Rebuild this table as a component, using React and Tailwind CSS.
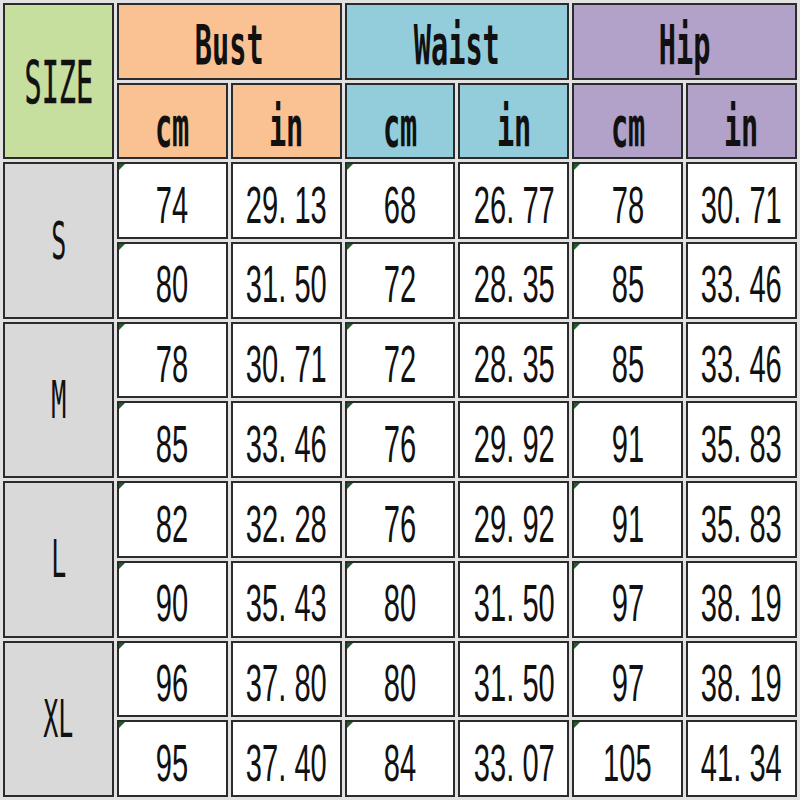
const rows = [
  {
    size: 'S',
    lines: [
      ['74', '29. 13', '68', '26. 77', '78', '30. 71'],
      ['80', '31. 50', '72', '28. 35', '85', '33. 46'],
    ],
  },
  {
    size: 'M',
    lines: [
      ['78', '30. 71', '72', '28. 35', '85', '33. 46'],
      ['85', '33. 46', '76', '29. 92', '91', '35. 83'],
    ],
  },
  {
    size: 'L',
    lines: [
      ['82', '32. 28', '76', '29. 92', '91', '35. 83'],
      ['90', '35. 43', '80', '31. 50', '97', '38. 19'],
    ],
  },
  {
    size: 'XL',
    lines: [
      ['96', '37. 80', '80', '31. 50', '97', '38. 19'],
      ['95', '37. 40', '84', '33. 07', '105', '41. 34'],
    ],
  },
]

const groups = [
  { label: 'Bust', bg: 'bg-[#fac292]' },
  { label: 'Waist', bg: 'bg-[#93cddc]' },
  { label: 'Hip', bg: 'bg-[#b2a1c8]' },
]

function Cell({ className = '', children, marker }) {
  return (
    <div
      className={`relative flex items-center justify-center overflow-hidden border-2 border-[#2b2b2b] ${className}`}
    >
      {marker && (
        <span className="absolute left-0 top-0 h-0 w-0 border-r-[6px] border-t-[6px] border-r-transparent border-t-[#1f5f2a]" />
      )}
      {children}
    </div>
  )
}

function HeadText({ children, className = '' }) {
  return (
    <span
      className={`inline-block shrink-0 whitespace-nowrap font-['DejaVu_Sans_Mono',monospace] font-bold leading-none text-[#111] ${className}`}
    >
      {children}
    </span>
  )
}

function NumText({ children }) {
  return (
    <span className="mt-[8px] inline-block shrink-0 scale-x-[0.56] whitespace-nowrap font-['Liberation_Sans',Arial,sans-serif] text-[52px] leading-none text-[#111]">
      {children}
    </span>
  )
}

export default function App() {
  return (
    <div className="grid h-[800px] w-[800px] grid-cols-7 grid-rows-10 gap-[3px] bg-[#e2e2e2] p-[3px]">
      <Cell className="row-span-2 bg-[#c6df9f]">
        <HeadText className="mt-[4px] scale-x-[0.49] text-[58px] font-normal [-webkit-text-stroke:0.6px_#111]">SIZE</HeadText>
      </Cell>
      {groups.map((g) => (
        <Cell key={g.label} className={`col-span-2 ${g.bg}`}>
          <HeadText className="mt-[8px] scale-x-[0.52] text-[55px]">{g.label}</HeadText>
        </Cell>
      ))}
      {groups.map((g) =>
        ['cm', 'in'].map((u) => (
          <Cell key={g.label + u} className={g.bg}>
            <HeadText className="mt-[12px] scale-x-[0.52] text-[55px]">{u}</HeadText>
          </Cell>
        ))
      )}
      {rows.map((r) => (
        <div key={r.size} className="contents">
          <Cell className="row-span-2 bg-[#d9d9d9]">
            <HeadText className="scale-x-[0.48] text-[52px] font-normal">{r.size}</HeadText>
          </Cell>
          {r.lines.map((line, i) =>
            line.map((v, j) => (
              <Cell key={`${i}-${j}`} className="bg-white" marker={j % 2 === 0}>
                <NumText>{v}</NumText>
              </Cell>
            ))
          )}
        </div>
      ))}
    </div>
  )
}
